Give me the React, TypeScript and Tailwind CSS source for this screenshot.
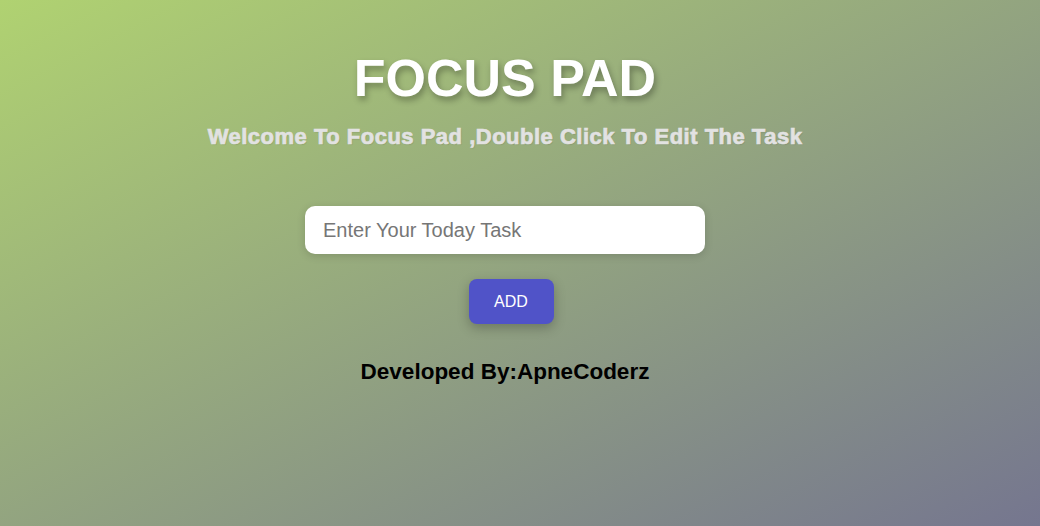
export default function App() {
  return (
    <div className="min-h-[526px] w-full bg-[linear-gradient(to_bottom_right,#b0d271,#75768f)] font-['Liberation_Sans',Arial,sans-serif]">
      <div className="flex flex-col items-center pr-[30px] pt-[48px]">
        <h1 className="text-[52px] font-bold leading-[60px] text-white [text-shadow:2px_4px_6px_rgba(0,0,0,0.3)]">
          FOCUS PAD
        </h1>
        <p className="mt-[16px] text-[22px] font-black leading-[26px] tracking-[0.5px] text-[#e2e2e2] [-webkit-text-stroke:0.7px_#e2e2e2] [text-shadow:1px_1px_1px_rgba(0,0,0,0.1)]">
          Welcome To Focus Pad ,Double Click To Edit The Task
        </p>
        <input
          type="text"
          placeholder="Enter Your Today Task"
          className="mt-[56px] h-[48px] w-[400px] rounded-[10px] bg-white px-[18px] text-[20px] text-[#333] shadow-[0_2px_8px_rgba(0,0,0,0.15)] outline-none placeholder:text-[#767676]"
        />
        <button className="ml-[12px] mt-[25px] h-[45px] w-[85px] rounded-[8px] bg-[#5053c8] text-[16px] text-white shadow-[0_4px_12px_rgba(0,0,0,0.25)]">
          ADD
        </button>
        <h3 className="mt-[34px] text-[22.5px] font-bold leading-[28px] text-black">
          Developed By:ApneCoderz
        </h3>
      </div>
    </div>
  );
}
